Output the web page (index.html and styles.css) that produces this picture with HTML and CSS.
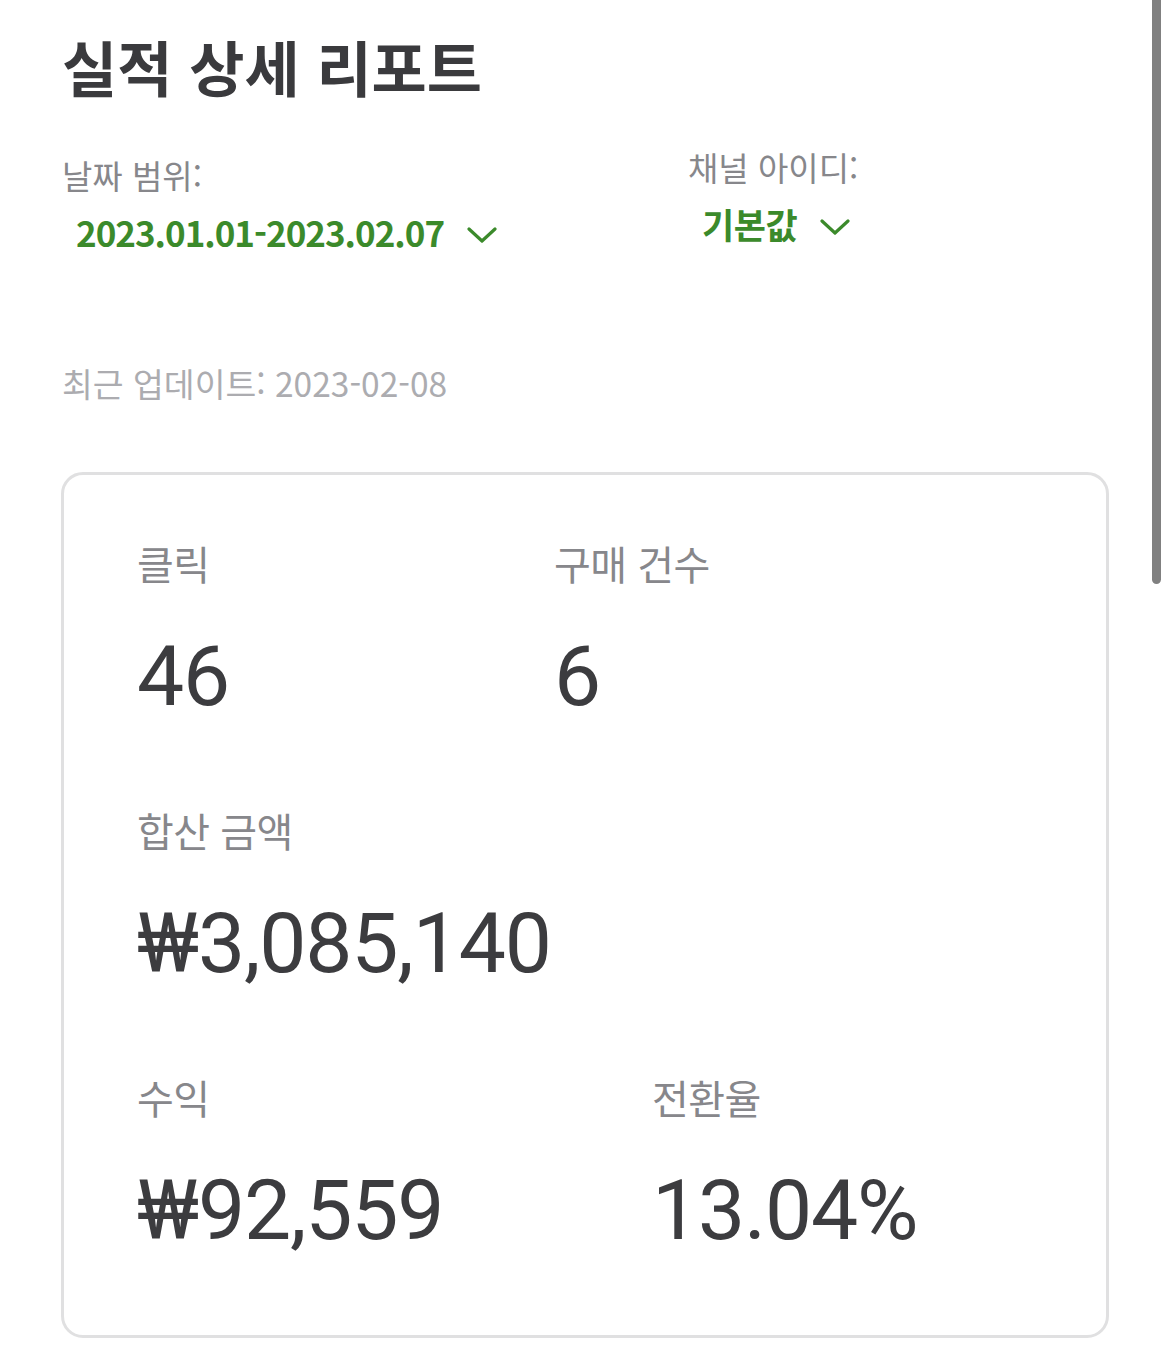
FILE: index.html
```html
<!DOCTYPE html>
<html lang="ko">
<head>
<meta charset="utf-8">
<link rel="stylesheet" href="styles.css">
</head>
<body>
<div class="page">
  <h1 class="title">실적 상세 리포트</h1>
  <div class="filters">
    <div class="filter filter-date">
      <div class="filter-label">날짜 범위:</div>
      <div class="filter-value">2023.01.01-2023.02.07
        <svg class="chev" width="30" height="18" viewBox="0 0 30 18"><path d="M2 3 L15 15 L28 3" fill="none" stroke="#3b8a2b" stroke-width="3.2" stroke-linecap="round" stroke-linejoin="round"/></svg>
      </div>
    </div>
    <div class="filter filter-channel">
      <div class="filter-label">채널 아이디:</div>
      <div class="filter-value">기본값
        <svg class="chev" width="30" height="18" viewBox="0 0 30 18"><path d="M2 3 L15 15 L28 3" fill="none" stroke="#3b8a2b" stroke-width="3.2" stroke-linecap="round" stroke-linejoin="round"/></svg>
      </div>
    </div>
  </div>
  <div class="updated">최근 업데이트: 2023-02-08</div>
  <div class="card">
    <div class="row">
      <div class="stat stat-a"><div class="stat-label">클릭</div><div class="stat-value">46</div></div>
      <div class="stat"><div class="stat-label">구매 건수</div><div class="stat-value">6</div></div>
    </div>
    <div class="row">
      <div class="stat"><div class="stat-label">합산 금액</div><div class="stat-value">₩3,085,140</div></div>
    </div>
    <div class="row">
      <div class="stat stat-b"><div class="stat-label">수익</div><div class="stat-value">₩92,559</div></div>
      <div class="stat"><div class="stat-label">전환율</div><div class="stat-value">13.04%</div></div>
    </div>
  </div>
</div>
<div class="scrollbar"></div>
</body>
</html>
```

FILE: styles.css
```css
html, body {
  margin: 0;
  padding: 0;
  background: #ffffff;
}
body {
  font-family: "Noto Sans CJK KR", "Noto Sans", sans-serif;
  color: #3c3c3f;
  width: 1170px;
  height: 1357px;
  overflow: hidden;
  position: relative;
}
.page {
  padding: 30px 0 0 62px;
}
.title {
  margin: 0;
  font-size: 60px;
  line-height: 72px;
  font-weight: 700;
  color: #3a3a3d;
  letter-spacing: 0;
}
.filters {
  display: flex;
  margin-top: 45px;
}
.filter-date {
  width: 626px;
  padding-top: 8px;
}
.filter-label {
  font-size: 33px;
  line-height: 40px;
  color: #87878b;
}
.filter-value {
  display: flex;
  align-items: center;
  padding-left: 14px;
  margin-top: 15px;
  font-size: 35px;
  line-height: 44px;
  font-weight: 700;
  color: #3b8a2b;
  letter-spacing: -1px;
}
.chev {
  margin-left: 23px;
  margin-top: 6px;
}
.filter-channel .filter-value {
  margin-top: 15px;
  letter-spacing: -0.5px;
}
.updated {
  margin-top: 109px;
  font-size: 33.5px;
  line-height: 40px;
  color: #acacb0;
}
.card {
  margin-top: 69px;
  margin-left: -1px;
  width: 969px;
  height: 795px;
  border: 3px solid #e0e0e1;
  border-radius: 22px;
  padding: 65px 0 0 73px;
  box-sizing: content-box;
}
.row {
  display: flex;
  height: 267px;
}
.stat-a { width: 417px; }
.stat-b { width: 515px; }
.stat-label {
  font-size: 40px;
  line-height: 46px;
  color: #87878b;
  letter-spacing: -0.5px;
}
.stat-value {
  font-family: Roboto, "Noto Sans CJK KR", sans-serif;
  font-size: 84px;
  line-height: 100px;
  color: #3c3c3f;
  margin-top: 41px;
  letter-spacing: -1.2px;
}
.scrollbar {
  position: absolute;
  top: 0;
  left: 1152px;
  width: 9px;
  height: 584px;
  background: #808080;
  border-radius: 0 0 5px 5px;
}
```
